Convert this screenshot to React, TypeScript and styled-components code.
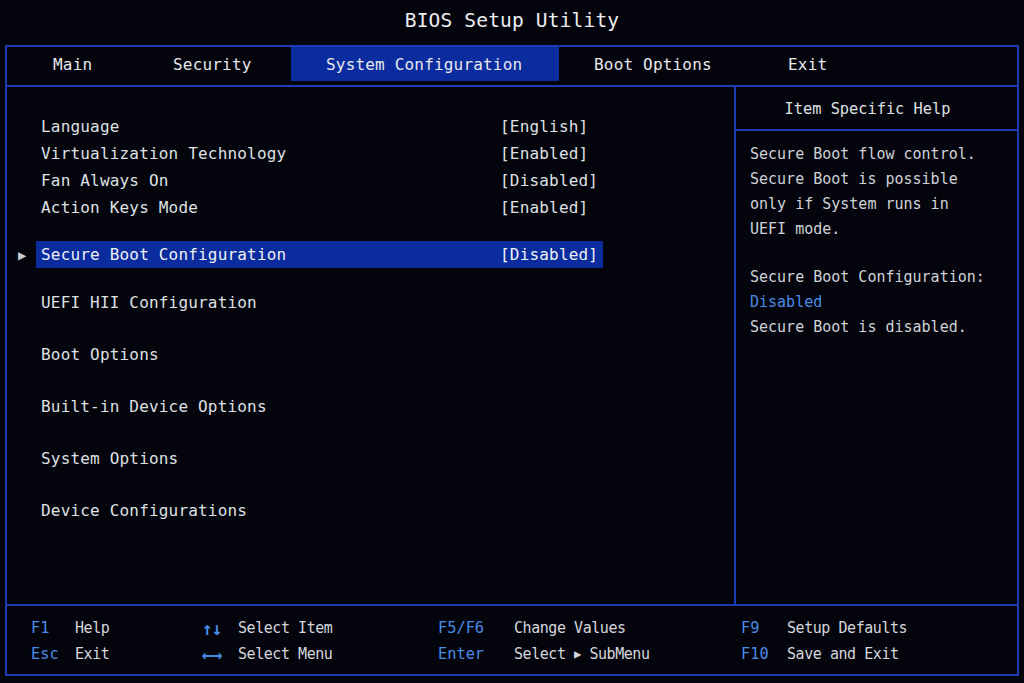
import styled, { createGlobalStyle } from 'styled-components';

const GlobalStyle = createGlobalStyle`
  html, body {
    margin: 0;
    padding: 0;
    background: #04050c;
  }
  * {
    box-sizing: border-box;
  }
`;

const line = '#1a3db4';
const keyBlue = '#4a8be6';

const Screen = styled.div`
  width: 1024px;
  height: 683px;
  display: flex;
  flex-direction: column;
  background: #04050c;
  color: #dfe0e4;
  font-family: 'DejaVu Sans Mono', 'Liberation Mono', monospace;
  font-size: 16px;
  letter-spacing: 0.18px;
  overflow: hidden;
`;

const Title = styled.div`
  height: 45px;
  flex-shrink: 0;
  display: flex;
  align-items: center;
  justify-content: center;
  font-size: 19.5px;
  color: #eceef2;
  padding-bottom: 4px;
`;

const Frame = styled.div`
  flex: 1;
  min-height: 0;
  margin: 0 5px 7px 5px;
  border: 2px solid ${line};
  display: flex;
  flex-direction: column;
`;

const TabBar = styled.div`
  height: 40px;
  flex-shrink: 0;
  display: flex;
  align-items: flex-start;
  padding-left: 11px;
  border-bottom: 2px solid ${line};
`;

const Tab = styled.div<{ $w: number; $active?: boolean }>`
  width: ${(p) => p.$w}px;
  height: 34px;
  padding-left: 35px;
  display: flex;
  align-items: center;
  background: ${(p) => (p.$active ? '#0a2c9e' : 'transparent')};
  color: #e6e8ec;
  white-space: nowrap;
`;

const Body = styled.div`
  flex: 1;
  min-height: 0;
  display: flex;
  border-bottom: 2px solid ${line};
`;

const MainPanel = styled.div`
  width: 727px;
  padding: 26px 0 0 0;
  display: flex;
  flex-direction: column;
`;

const Row = styled.div`
  height: 27px;
  flex-shrink: 0;
  display: grid;
  grid-template-columns: 459px auto;
  align-items: center;
  padding-left: 34px;
`;

const Value = styled.span`
  white-space: pre;
`;

const SelectedWrap = styled.div`
  display: flex;
  align-items: center;
  margin: 20px 0 8px 0;
`;

const Pointer = styled.span`
  width: 29px;
  padding-left: 11px;
  font-size: 14px;
  color: #c9cbd2;
`;

const SelectedRow = styled.div`
  width: 567px;
  height: 27px;
  display: grid;
  grid-template-columns: 459px auto;
  align-items: center;
  padding-left: 5px;
  background: #0a2c9e;
  color: #eef0f4;
`;

const SubMenu = styled.div`
  height: 52px;
  flex-shrink: 0;
  display: flex;
  align-items: center;
  padding-left: 34px;
`;

const HelpPanel = styled.div`
  flex: 1;
  border-left: 2px solid ${line};
  display: flex;
  flex-direction: column;
`;

const HelpHeader = styled.div`
  height: 44px;
  display: flex;
  align-items: center;
  justify-content: center;
  border-bottom: 2px solid ${line};
  font-size: 15.3px;
  letter-spacing: 0;
  padding: 2px 18px 0 0;
`;

const HelpText = styled.div`
  padding: 11px 0 0 14px;
  line-height: 25px;
  font-size: 15px;
  letter-spacing: 0;
  color: #cfd2d8;
`;

const HelpLine = styled.div<{ $blue?: boolean; $gap?: boolean }>`
  color: ${(p) => (p.$blue ? keyBlue : 'inherit')};
  margin-top: ${(p) => (p.$gap ? '23px' : '0')};
  white-space: pre;
`;

const Footer = styled.div`
  height: 68px;
  flex-shrink: 0;
  padding: 9px 0 0 24px;
  display: grid;
  grid-template-columns: 44px 127px 36px 200px 76px 227px 46px auto;
  grid-auto-rows: 26px;
  align-items: center;
  font-size: 15px;
  letter-spacing: -0.45px;
`;

const Key = styled.span`
  color: ${keyBlue};
  font-size: 15.3px;
  letter-spacing: 0;
  white-space: pre;
`;

const Arrows = styled.span`
  color: ${keyBlue};
  font-size: 18px;
  font-weight: bold;
  letter-spacing: -1px;
`;

const Desc = styled.span`
  color: #d4d6dc;
  white-space: pre;
`;

const Tri = styled.span`
  font-size: 12px;
  vertical-align: 1px;
`;

const tabs = [
  { label: 'Main', w: 120 },
  { label: 'Security', w: 153 },
  { label: 'System Configuration', w: 268, active: true },
  { label: 'Boot Options', w: 194 },
  { label: 'Exit', w: 120 },
];

const settings = [
  ['Language', '[English]'],
  ['Virtualization Technology', '[Enabled]'],
  ['Fan Always On', '[Disabled]'],
  ['Action Keys Mode', '[Enabled]'],
];

const submenus = [
  'UEFI HII Configuration',
  'Boot Options',
  'Built-in Device Options',
  'System Options',
  'Device Configurations',
];

const App = () => {
  return (
    <Screen>
      <GlobalStyle />
      <Title>BIOS Setup Utility</Title>
      <Frame>
        <TabBar>
          {tabs.map((t) => (
            <Tab key={t.label} $w={t.w} $active={t.active}>
              {t.label}
            </Tab>
          ))}
        </TabBar>
        <Body>
          <MainPanel>
            {settings.map(([name, val]) => (
              <Row key={name}>
                <span>{name}</span>
                <Value>{val}</Value>
              </Row>
            ))}
            <SelectedWrap>
              <Pointer>▶</Pointer>
              <SelectedRow>
                <span>Secure Boot Configuration</span>
                <Value>[Disabled]</Value>
              </SelectedRow>
            </SelectedWrap>
            {submenus.map((s) => (
              <SubMenu key={s}>{s}</SubMenu>
            ))}
          </MainPanel>
          <HelpPanel>
            <HelpHeader>Item Specific Help</HelpHeader>
            <HelpText>
              <HelpLine>Secure Boot flow control.</HelpLine>
              <HelpLine>Secure Boot is possible</HelpLine>
              <HelpLine>only if System runs in</HelpLine>
              <HelpLine>UEFI mode.</HelpLine>
              <HelpLine $gap>Secure Boot Configuration:</HelpLine>
              <HelpLine $blue>Disabled</HelpLine>
              <HelpLine>Secure Boot is disabled.</HelpLine>
            </HelpText>
          </HelpPanel>
        </Body>
        <Footer>
          <Key>F1</Key>
          <Desc>Help</Desc>
          <Arrows>↑↓</Arrows>
          <Desc>Select Item</Desc>
          <Key>F5/F6</Key>
          <Desc>Change Values</Desc>
          <Key>F9</Key>
          <Desc>Setup Defaults</Desc>
          <Key>Esc</Key>
          <Desc>Exit</Desc>
          <Arrows>←→</Arrows>
          <Desc>Select Menu</Desc>
          <Key>Enter</Key>
          <Desc>
            Select <Tri>▶</Tri> SubMenu
          </Desc>
          <Key>F10</Key>
          <Desc>Save and Exit</Desc>
        </Footer>
      </Frame>
    </Screen>
  );
};

export default App;
